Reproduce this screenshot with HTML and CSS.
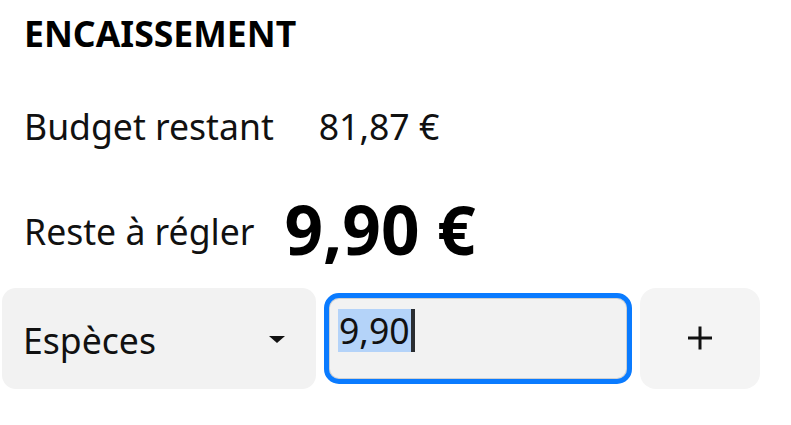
FILE: index.html
```html
<!DOCTYPE html>
<html lang="fr">
<head>
<meta charset="utf-8">
<link rel="stylesheet" href="styles.css">
</head>
<body>
<div class="page">
  <h1 class="title">ENCAISSEMENT</h1>
  <div class="row budget">
    <span class="label">Budget restant</span>
    <span class="value">81,87 €</span>
  </div>
  <div class="row reste">
    <span class="label">Reste à régler</span>
    <span class="amount">9,90 €</span>
  </div>
  <div class="controls">
    <div class="select">
      <span class="select-text">Espèces</span>
      <svg class="caret-down" width="16" height="7" viewBox="0 0 16 7"><polygon points="0,0 16,0 8,7" fill="#111"/></svg>
    </div>
    <div class="input"><span class="sel">9,90</span><span class="cursor"></span></div>
    <div class="plus">
      <svg width="26" height="26" viewBox="0 0 26 26"><path d="M13 1.5V24.5M1 13H25" stroke="#111" stroke-width="3" fill="none"/></svg>
    </div>
  </div>
</div>
</body>
</html>
```
FILE: styles.css
```css
html, body {
  margin: 0;
  padding: 0;
  background: #fff;
}
body {
  font-family: "Noto Sans", "Open Sans", sans-serif;
  color: #111;
}
.page {
  width: 791px;
  height: 425px;
  overflow: hidden;
}
.title {
  margin: 0;
  padding: 9px 0 0 24px;
  font-size: 35.6px;
  line-height: 48px;
  font-weight: 700;
  color: #000;
}
.row {
  display: flex;
  padding-left: 24px;
}
.budget {
  margin-top: 45px;
  font-size: 35.6px;
  line-height: 48px;
}
.budget .value {
  margin-left: 45px;
}
.reste {
  margin-top: 39px;
  align-items: center;
  height: 80px;
}
.reste .label {
  font-size: 35.6px;
  line-height: 48px;
  padding-top: 3px;
}
.reste .amount {
  margin-left: 30px;
  font-size: 67.5px;
  font-weight: 700;
  line-height: 80px;
  color: #000;
}
.controls {
  display: flex;
  align-items: center;
  gap: 8px;
  margin-top: 19px;
  padding-left: 2px;
}
.select {
  box-sizing: border-box;
  width: 314px;
  height: 101px;
  background: #f2f2f2;
  border-radius: 14px;
  display: flex;
  align-items: center;
  justify-content: space-between;
  padding: 0 31px 0 21px;
  font-size: 35.6px;
}
.select-text {
  padding-top: 2px;
}
.caret-down {
  margin-top: 2px;
}
.input {
  box-sizing: border-box;
  width: 308px;
  height: 91px;
  border: 5px solid #0a7bff;
  border-radius: 15px;
  background: #f2f2f2;
  box-shadow: inset 0 0 0 1px #d0d0d0;
  display: flex;
  align-items: flex-start;
  padding: 11px 0 0 9px;
  font-size: 35.6px;
  line-height: 43px;
}
.sel {
  background: #b4d3f9;
  padding: 0 1px 0 1px;
}
.cursor {
  width: 4px;
  height: 43px;
  background: #2a2d31;
}
.plus {
  width: 120px;
  height: 101px;
  background: #f4f4f4;
  border-radius: 16px;
  display: flex;
  align-items: center;
  justify-content: center;
}
.plus svg {
  margin-top: -2px;
}
```
